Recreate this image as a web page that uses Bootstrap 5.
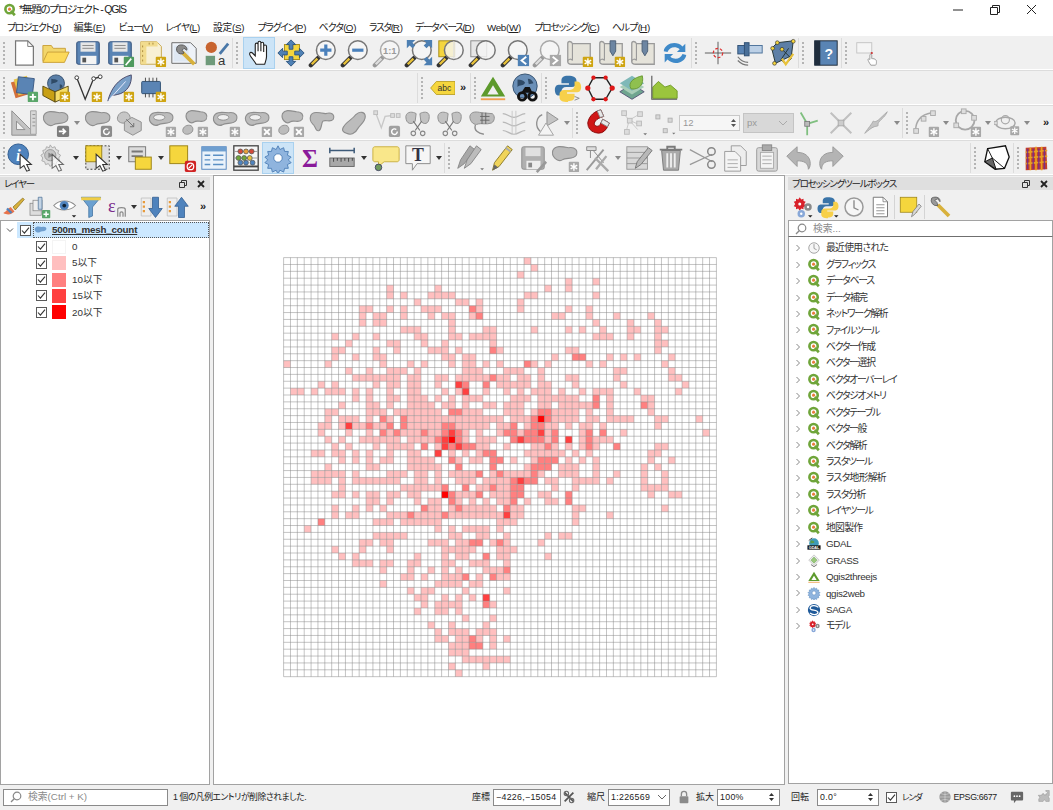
<!DOCTYPE html>
<html lang="ja">
<head>
<meta charset="UTF-8">
<meta name="viewport" content="width=device-width, initial-scale=1">
<title>*無題のプロジェクト - QGIS</title>
<link href="https://cdn.jsdelivr.net/npm/bootstrap@5.3.3/dist/css/bootstrap.min.css" rel="stylesheet">
<style>
html, body { width: 1053px; height: 810px; overflow: hidden; }
body { background: #f0f0f0; color: #222; font: 9.5px/1.2 "Liberation Sans", "Noto Sans CJK JP", sans-serif; font-feature-settings: "palt"; }
.qapp { width: 1053px; height: 810px; }
.qtitle { height: 19px; background: #fff; padding: 0 3px; font-size: 10.5px; }
.qtitle > span:first-of-type { letter-spacing: -1.2px; }
.qtitle svg { width: 14px; height: 14px; margin-right: 2px; }
.qctl { width: 37px; height: 17px; }
.qctl svg { width: 37px; height: 17px; }
.qmenu { height: 17px; background: #fff; padding-left: 7px; gap: 13.4px; font-size: 9.8px; }
.qmenu u { text-underline-offset: 1px; letter-spacing: -.1px; }
.kn { letter-spacing: -1.3px; } .kw { letter-spacing: -.8px; } .kj { letter-spacing: -.3px; }
.qbars { height: 139px; }
.qrow { height: 34px; border-bottom: 1px solid #fff; box-shadow: 0 1px 0 #dcdcdc; flex: none; }
.qrow + .qrow { margin-top: 1px; }
.tbi { width: 32px; height: 32px; flex: none; padding: 0; border: 1px solid transparent; border-radius: 0; display: flex; align-items: center; justify-content: center; }
.tbi svg { width: 30px; height: 30px; }
.tbi.on { background: #cce4f7; border-color: #a9d1ef; }
.tbi.w26 { width: 26px; } .tbi.w28 { width: 28px; } .tbi.w35 { width: 35px; } .tbi.w38 { width: 38px; }
.dda { width: 10px; flex: none; height: 32px; display: flex; align-items: center; justify-content: center; }
.dda::after { content: ""; border: 3px solid transparent; border-top: 4px solid #333; border-bottom: 0; }
.dda.dim::after { border-top-color: #8a8a8a; }
.dda.w12 { width: 12px; } .dda.w8 { width: 8px; }
.grip { width: 11px; flex: none; height: 30px; position: relative; border-left: 1px solid #dcdcdc; }
.grip::after { content: ""; position: absolute; left: 3px; top: 4px; bottom: 4px; border-left: 2px dotted #b4b4b4; }
.grip.nar { width: 7px; } .grip.g9 { width: 9px; }
.grip.first { width: 8px; border-left: 0; } .grip.first.g6 { width: 6px; }
.qfill260 { width: 249px; flex: none; }
.qfill123 { width: 123px; flex: none; }
.qmore { width: 14px; font-weight: 700; font-size: 11px; text-align: center; flex: none; }
.qspin { display: flex; width: 61px; margin-left: 1px; border: 1px solid #c8c8c8; background: #f6f6f6; color: #999; height: 16px; align-items: center; flex: none; }
.qspin .form-control { flex: 1; width: auto; min-width: 0; border: 0; background: transparent; padding: 0 0 0 3px; font-size: 9.5px; border-radius: 0; height: 14px; min-height: 0; color: inherit; line-height: 14px; box-shadow: none; font-family: inherit; }
.qarr { width: 11px; height: 14px; flex: none; }
.qpx { width: 51px; height: 20px; background: #d8d8d8; border: 1px solid #c4c4c4; color: #999; font-size: 9.5px; padding-left: 3px; margin: 0 0 0 3px; flex: none; }
.qpx svg { width: 10px; height: 6px; margin: 0 5px 0 auto; }
.qmain { height: 610px; }
.qdock { flex: none; }
.qwl { width: 210px; } .qwr { width: 265px; }
.qdtitle { height: 13px; margin: 2px 0 0 0; background: #dfdfdf; padding: 0 4px 0 4px; font-size: 9.5px; letter-spacing: -1.2px; }
.qdtitle svg { width: 10px; height: 10px; margin-left: 8px; }
.qdbar { height: 30px; padding-top: 4px; }
.qdbar.r1 { padding-left: 1px; }
.dbi { width: 26px; height: 26px; flex: none; padding: 0; border: 0; display: flex; align-items: center; justify-content: center; }
.dbi svg { width: 24px; height: 24px; }
.qdsep { width: 1px; height: 24px; background: #d4d4d4; margin: 0 2px 0 1px; flex: none; }
.qtree { background: #fff; border: 1px solid #a2a2a2; margin: 0; padding: 1px 0 0 0; list-style: none; font-size: 9.8px; color: #333; }
.qtree li { height: 16.45px; display: flex; align-items: center; }
.qtree svg.qt { width: 14px; height: 14px; flex: none; }
.qchev { width: 8px; height: 8px; flex: none; }
.qhead { padding-left: 5px; }
.qsel { background: #cce8ff; margin-left: 3px; height: 16px; width: 192px; padding-left: 3px; flex: none; }
.qselt { font-weight: 700; letter-spacing: -.2px; text-decoration: underline; outline: 1px dotted #555; outline-offset: -1px; flex: 1; align-self: stretch; display: flex; align-items: center; margin-left: 2px; padding-left: 1px; }
.qselt svg { margin-right: 4px; }
.qbox { width: 11px; height: 11px; margin: 0; flex: none; border: 1px solid #5a5a5a; border-radius: 0 !important; background-color: #fff !important; background-size: 11px 11px; }
.qbox:checked { background-image: url("data:image/svg+xml,%3csvg xmlns='http://www.w3.org/2000/svg' viewBox='0 0 11 11'%3e%3cpath d='M2 5.5l2.4 2.6L9 2.6' fill='none' stroke='%23333' stroke-width='1.1'/%3e%3c/svg%3e"); border-color: #5a5a5a; }
.qswatch { width: 14px; height: 14px; flex: none; margin: 0 6px 0 5px; }
.lv0 { background: #fff; border: 1px solid #f4f4f4; } .lv1 { background: #ffbfbf; } .lv2 { background: #ff8080; } .lv3 { background: #ff4040; } .lv4 { background: #ff0000; }
.qkid { padding-left: 35px; }
.qcanvas { width: 572px; background: #fff; border: 1px solid #a2a2a2; margin: 0 3px 0 3px; padding: 81px 0 0 2px; flex: none; }
.qmap { width: 435px; height: 421px; display: block; }
.qsearch { height: 17px; border: 1px solid #a2a2a2; border-bottom-color: #6f6f6f; background: #fff; padding-left: 6px; color: #8a8a8a; font-size: 9.8px; }
.qsearch svg { width: 12px; height: 12px; margin-right: 6px; }
.qlist { border-top: 0; padding: 3px 0 0 0; height: 547px; letter-spacing: -1.25px; }
.qlist li { padding-left: 5px; }
.qlist li.lat { letter-spacing: -.35px; }
.qlist li.kan { letter-spacing: -.7px; }
.qlist .qt { margin: 0 5px 0 5px; }
.qstatus { height: 24px; font-size: 8.8px; padding-left: 3px; }
.qfind { width: 165px; height: 17px; border: 1px solid #8a8a8a; background: #fff; color: #8a8a8a; font-size: 9.8px; padding-left: 6px; flex: none; }
.qfind svg { width: 12px; height: 12px; margin-right: 6px; }
.qmsg { width: 299px; margin-left: 5px; letter-spacing: -.45px; flex: none; }
.qlab { flex: none; font-size: 9px; }
.qval { height: 17px; background: #fff; border: 1px solid #8a8a8a; padding: 0 2px; flex: none; font-size: 8.8px; letter-spacing: .3px; color: #222; display: flex; align-items: center; }
.qval span { flex: 1; }
.qval svg { flex: none; }
.qsi { width: 14px; height: 14px; flex: none; }
.v68 { width: 68px; margin-left: 3px; } .v62 { width: 62px; } .v63 { width: 63px; }
.m1 { margin-left: 1px; } .m3 { margin-left: 3px; } .m5 { margin-left: 5px; } .m7 { margin-left: 7px; } .m8 { margin-left: 8px; } .m11 { margin-left: 11px; } .m13 { margin-left: 13px; } .m16 { margin-left: 16px; }
.qren { font-size: 8.5px; letter-spacing: -1.1px; white-space: nowrap; flex: none; }
.qepsg { letter-spacing: -.35px; margin-left: 2px; white-space: nowrap; flex: none; }
</style>
</head>
<body>
<svg class="d-none" xmlns="http://www.w3.org/2000/svg">
<defs>
<g id="q"><circle cx="15" cy="14" r="9.5" fill="#fff" stroke="#6fa53a" stroke-width="6"/><path d="M18 18l9 10" stroke="#6fa53a" stroke-width="6"/><circle cx="15" cy="14" r="3.5" fill="#e87a3a"/></g>
<g id="bstar"><rect x="20" y="20" width="11" height="11" rx="1" fill="#cfa512"/><path d="M25.5 21.5v8M22 23.5l7 4M29 23.5l-7 4" stroke="#fff" stroke-width="1.5"/></g>
<g id="gstar"><rect x="20" y="20" width="11" height="11" rx="1" fill="#a8a8a8"/><path d="M25.5 21.5v8M22 23.5l7 4M29 23.5l-7 4" stroke="#fff" stroke-width="1.5"/></g>
<g id="gx"><rect x="20" y="20" width="11" height="11" rx="1" fill="#a8a8a8"/><path d="M22.5 22.5l6 6M28.5 22.5l-6 6" stroke="#fff" stroke-width="2"/></g>
<g id="floppy"><rect x="4" y="4" width="24" height="24" rx="2" fill="#5a84b4" stroke="#3c5a82" stroke-width="1.2"/><rect x="8" y="4.6" width="16" height="10" fill="#e6e6e6"/><path d="M10 8h12M10 11h12" stroke="#888"/><rect x="8" y="19" width="17" height="9" fill="#f4f4f4"/><rect x="10" y="21" width="4" height="5" fill="#555"/></g>
<g id="mag"><path d="M3 29l8-8" stroke="#333" stroke-width="4.6" stroke-linecap="round"/><path d="M4 28l6-6" stroke="#e8c23a" stroke-width="2.6"/><circle cx="19" cy="13" r="10" fill="#f6f6f6" fill-opacity=".8" stroke="#777" stroke-width="1.6"/></g>
<g id="magg"><path d="M3 29l8-8" stroke="#999" stroke-width="4.6" stroke-linecap="round"/><path d="M4 28l6-6" stroke="#ddd" stroke-width="2.6"/><circle cx="19" cy="13" r="10" fill="#f6f6f6" fill-opacity=".8" stroke="#a8a8a8" stroke-width="1.6"/></g>
<g id="gmap"><path d="M4 6c0-3 4-3 5 0h19v22H8c-2 0-4-1-4-3z" fill="#e5e3da" stroke="#9a9a9a" stroke-width="1.4"/><path d="M4 25c0-3 4-3 5-1V6" fill="none" stroke="#9a9a9a" stroke-width="1.2"/></g>
<g id="pin"><path d="M15 3h6v11l-3 5-3-5z" fill="#6d86a2" stroke="#4d6076"/></g>
<g id="blob"><path d="M3 8C6 2 14 4 20 5c7-1 10 3 8 8-3 5-11 2-15 5-5 3-12-4-10-10z" fill="#bcbcbc" stroke="#8e8e8e" stroke-width="1.2"/></g>
<g id="ring"><path d="M3 9C5 3 13 5 19 5c7-1 10 3 8 8-3 5-11 2-15 5C7 20 1 15 3 9z" fill="#bcbcbc" stroke="#8e8e8e" stroke-width="1.2"/><ellipse cx="13" cy="10" rx="6" ry="3" fill="#f0f0f0" stroke="#8e8e8e"/></g>
<g id="blob2"><path d="M8 6C11 1 17 3 23 4c6 0 8 4 6 8-3 5-9 0-13 3-4 3-10-3-8-9z" fill="#bcbcbc" stroke="#8e8e8e" stroke-width="1.2"/><path d="M4 24c0-4 5-7 9-5 3 2 2 7-1 8-3 2-8 1-8-3z" fill="#bcbcbc" stroke="#8e8e8e"/></g>
<g id="sciss"><path d="M3 9C4 3 11 4 14 6l-1 8c-3 4-10 4-10-5zM28 9c0-6-7-5-10-3l1 8c3 4 9 4 9-5z" fill="#c2c2c2" stroke="#8e8e8e"/><path d="M11 14l7 10M20 14l-7 10" stroke="#777" stroke-width="1.2"/><circle cx="11" cy="27" r="2.4" fill="none" stroke="#888" stroke-width="1.2"/><circle cx="21" cy="27" r="2.4" fill="none" stroke="#888" stroke-width="1.2"/></g>
<g id="cur"><path d="M14 12v15l4-3 3 6 3-1-3-6h5z" fill="#fff" stroke="#333" stroke-width="1.1"/></g>
<g id="tri"><path d="M16 4L29 25H3zM16 13l-6 10h12z" fill="#5d9a2c" fill-rule="evenodd"/><rect x="3" y="27" width="26" height="2" fill="#f0a050"/></g>
<g id="py"><path d="M16 3c-5 0-7 2-7 5v3h8v1.5H6c-3 0-4 3-4 5.5s1 6 4 6h3v-4c0-3 2-5 5-5h6c3 0 5-2 5-4V8c0-3-3-5-9-5z" fill="#3a74a8"/><path d="M16 30c5 0 7-2 7-5v-3h-8v-1.500h11c3 0 4-3 4-5.500s-1-6-4-6h-3v4c0 3-2 5-5 5h-6c-3 0-5 2-5 4v4c0 3 3 5 9 5z" fill="#f7d04a"/></g>
<g id="gears"><path d="M13 3l2 3 3-1 0 3 3 1-2 3 2 3-3 1 0 3-3-1-2 3-2-3-3 1 0-3-3-1 2-3-2-3 3-1 0-3 3 1z" fill="#d8212a"/><circle cx="13" cy="12" r="2" fill="#fff"/><circle cx="24" cy="16" r="5" fill="#8a8a8a"/><circle cx="24" cy="16" r="1.600" fill="#fff"/><circle cx="15" cy="25" r="5" fill="#88a8d8"/><circle cx="15" cy="25" r="1.600" fill="#fff"/></g>
<g id="wgear"><path d="M16 3l2 4 4-2 1 4 4 0-1 4 4 2-3 3 3 3-4 2 1 4-4 0-1 4-4-2-2 4-2-4-4 2-1-4-4 0 1-4-4-2 3-3-3-3 4-2-1-4 4 0 1-4 4 2z" fill="#8fb4de" stroke="#4f80b8"/><circle cx="16" cy="16" r="4.500" fill="#fff" stroke="#4f80b8"/></g>
<g id="clock"><circle cx="16" cy="16" r="12" fill="#f6f6f6" stroke="#9a9a9a" stroke-width="2"/><path d="M16 7v10l6 3" fill="none" stroke="#8a8a8a" stroke-width="1.800"/></g>
<g id="chev"><path d="M2.500 1l3 3-3 3" fill="none" stroke="#888"/></g>
</defs>
</svg>

<div class="qapp d-flex flex-column">
  <div class="qtitle d-flex align-items-center">
    <svg viewBox="0 0 32 32"><use href="#q"/></svg>
    <span>*無題のプロジェクト - QGIS</span>
    <span class="qctl ms-auto"><svg viewBox="0 0 37 17"><path d="M14 9h10" stroke="#222"/></svg></span>
    <span class="qctl"><svg viewBox="0 0 37 17"><path d="M14.500 6.500h7v7h-7zM16.500 6.500v-2h7v7h-2" fill="none" stroke="#222"/></svg></span>
    <span class="qctl"><svg viewBox="0 0 37 17"><path d="M14 4l9 9M23 4l-9 9" stroke="#222"/></svg></span>
  </div>
  <div class="qmenu d-flex align-items-center">
    <span class="kn">プロジェクト(<u>J</u>)</span><span class="kj">編集(<u>E</u>)</span><span class="kn">ビュー(<u>V</u>)</span><span class="kw">レイヤ(<u>L</u>)</span><span class="kj">設定(<u>S</u>)</span><span class="kn">プラグイン(<u>P</u>)</span><span class="kw">ベクタ(<u>O</u>)</span><span class="kn">ラスタ(<u>R</u>)</span><span class="kn">データベース(<u>D</u>)</span><span class="kj">Web(<u>W</u>)</span><span class="kn">プロセッシング(<u>C</u>)</span><span class="kw">ヘルプ(<u>H</u>)</span>
  </div>

  <div class="qbars">
    <!-- row 1 -->
    <div class="qrow d-flex align-items-center">
      <span class="grip first"></span>
      <span class="tbi"><svg viewBox="0 0 32 32"><path d="M7 3h13l6 6v20H7z" fill="#fff" stroke="#777" stroke-width="1.300"/><path d="M20 3v6h6" fill="none" stroke="#777"/></svg></span>
      <span class="tbi"><svg viewBox="0 0 32 32"><path d="M2 25V8h9l2 3h13v4" fill="#f2d66b" stroke="#c9a03a"/><path d="M2 26l5-11h23l-5 11z" fill="#fcd95a" stroke="#c9a03a"/></svg></span>
      <span class="tbi"><svg viewBox="0 0 32 32"><use href="#floppy"/></svg></span>
      <span class="tbi"><svg viewBox="0 0 32 32"><use href="#floppy"/><rect x="20" y="20" width="11" height="11" rx="1" fill="#4f9a5e"/><path d="M22 29l6-7" stroke="#fff" stroke-width="1.800"/></svg></span>
      <span class="tbi"><svg viewBox="0 0 32 32"><path d="M4 4h17l5 5v19H4z" fill="#f8f0d4" stroke="#c8a84e"/><path d="M4 4h6v24H4zM4 4h18v5H4z" fill="#f2dc8e"/><path d="M6 8v2m0 3v2m0 3v2m0 3v2M13 5v2m4-2v2" stroke="#a8883a"/><use href="#bstar"/></svg></span>
      <span class="tbi"><svg viewBox="0 0 32 32"><path d="M3 5h20l6 6v16H3z" fill="#eef2f8" stroke="#666"/><path d="M5 8h16v17H5z" fill="#dfe8f3"/><path d="M14 15l13 13" stroke="#d8b13c" stroke-width="4"/><path d="M10 8a5 5 0 0 0 6 8l-2-3 2-2 3 2c1-4-4-7-9-5z" fill="#8a8a8a" stroke="#555"/></svg></span>
      <span class="tbi"><svg viewBox="0 0 32 32"><circle cx="11" cy="10" r="6" fill="#c8642f"/><path d="M20 17L29 6" stroke="#4a78a8" stroke-width="3"/><rect x="5" y="19" width="10" height="10" fill="#6f9a7a"/><text x="18" y="29" font-size="14" fill="#333">a</text></svg></span>
      <span class="grip"></span>
      <span class="tbi on"><svg viewBox="0 0 32 32"><path d="M13 28C10 23 6 19 6 17c0-2 2-2 3-1l3 3V7c0-2 3-2 3 0v7V5c0-2 3-2 3 0v9V6c0-2 3-2 3 0v9V9c0-2 3-2 3 0v11c0 3-1 5-2 8z" fill="#fff" stroke="#222" stroke-width="1.200"/></svg></span>
      <span class="tbi"><svg viewBox="0 0 32 32"><rect x="9" y="7" width="16" height="16" fill="#f5d63d" stroke="#a58a15"/><g fill="#4f81b5" stroke="#2f5680"><path d="M16 2l5 5h-3v5h-4V7h-3z"/><path d="M16 30l5-5h-3v-5h-4v5h-3z"/><path d="M2 16l5-5v3h5v4H7v3z"/><path d="M30 16l-5-5v3h-5v4h5v3z"/></g></svg></span>
      <span class="tbi"><svg viewBox="0 0 32 32"><use href="#mag"/><path d="M13 13h12M19 7v12" stroke="#4a80bb" stroke-width="3.400"/></svg></span>
      <span class="tbi"><svg viewBox="0 0 32 32"><use href="#mag"/><path d="M13 13h12" stroke="#4a80bb" stroke-width="3.400"/></svg></span>
      <span class="tbi"><svg viewBox="0 0 32 32"><use href="#magg"/><text x="19" y="17" font-size="10" font-weight="700" fill="#9a9a9a" text-anchor="middle">1:1</text></svg></span>
      <span class="tbi"><svg viewBox="0 0 32 32"><use href="#mag"/><g fill="#4d7fb2"><path d="M3 2h9L9 5l3 3-3 3-3-3-3 3z"/><path d="M30 2h-9l3 3-3 3 3 3 3-3 3 3z"/><path d="M30 29h-9l3-3-3-3 3-3 3 3 3-3z"/></g></svg></span>
      <span class="tbi"><svg viewBox="0 0 32 32"><rect x="3" y="3" width="17" height="17" fill="#f5d63d" stroke="#a58a15"/><use href="#mag"/><path d="M19 3.500v19" stroke="#ddd"/></svg></span>
      <span class="tbi"><svg viewBox="0 0 32 32"><rect x="3" y="3" width="17" height="17" fill="#e6e6e6" stroke="#888"/><use href="#mag"/></svg></span>
      <span class="tbi"><svg viewBox="0 0 32 32"><use href="#mag"/><rect x="19" y="18" width="12" height="12" fill="#4f81b5"/><path d="M28 20l-5 4 5 4" fill="none" stroke="#fff" stroke-width="2"/></svg></span>
      <span class="tbi"><svg viewBox="0 0 32 32"><use href="#magg"/><rect x="19" y="18" width="12" height="12" fill="#a8a8a8"/><path d="M22 20l5 4-5 4" fill="none" stroke="#fff" stroke-width="2"/></svg></span>
      <span class="tbi"><svg viewBox="0 0 32 32"><use href="#gmap"/><use href="#bstar"/></svg></span>
      <span class="tbi"><svg viewBox="0 0 32 32"><use href="#gmap"/><use href="#pin"/><use href="#bstar"/></svg></span>
      <span class="tbi"><svg viewBox="0 0 32 32"><use href="#gmap"/><use href="#pin"/></svg></span>
      <span class="tbi"><svg viewBox="0 0 32 32"><path d="M4 14C5 6 17 2 24 9l3-3v9h-9l3-3C16 8 10 10 8 15z" fill="#3f8ac9"/><path d="M28 18C27 26 15 30 8 23l-3 3v-9h9l-3 3C16 24 22 22 24 17z" fill="#3f8ac9"/></svg></span>
      <span class="grip"></span>
      <span class="tbi"><svg viewBox="0 0 32 32"><path d="M2 16h28M16 4v24" stroke="#555"/><circle cx="16" cy="16" r="5" fill="none" stroke="#d33" stroke-width="1.300" stroke-dasharray="3 2"/></svg></span>
      <span class="tbi"><svg viewBox="0 0 32 32"><rect x="3" y="8" width="8" height="9" fill="#5a84b4" stroke="#2f4f72"/><rect x="10" y="5" width="5" height="14" fill="#4a6f98" stroke="#2f4f72"/><rect x="15" y="8" width="14" height="8" fill="#bcd0e6" stroke="#4a6f98"/><path d="M3 20c3 4 7 6 11 6M3 24c3 3 7 5 11 5" fill="none" stroke="#777" stroke-width="1.300"/></svg></span>
      <span class="tbi"><svg viewBox="0 0 32 32"><path d="M5 11L11 5l17-2-2 16-17 8z" fill="#5d7fa6" stroke="#233"/><path d="M16 12l10 10-6 6-5-5 8-12" fill="none" stroke="#233"/><g fill="#f5d63d" stroke="#333" stroke-width=".7"><circle cx="6" cy="11" r="2"/><circle cx="11" cy="5" r="2"/><circle cx="28" cy="3.500" r="2"/><circle cx="8" cy="27" r="2"/><circle cx="16" cy="12" r="2"/></g><path d="M16 22l4 6 8-11" fill="none" stroke="#e8c23a" stroke-width="2.400"/></svg></span>
      <span class="grip"></span>
      <span class="tbi"><svg viewBox="0 0 32 32"><rect x="5" y="3" width="24" height="26" fill="#5984b4" stroke="#1d2a38"/><rect x="5" y="3" width="6" height="26" fill="#1f2d3d"/><text x="20" y="22" font-size="15" font-weight="700" fill="#fff" text-anchor="middle">?</text></svg></span>
      <span class="grip"></span>
      <span class="tbi"><svg viewBox="0 0 32 32"><rect x="4" y="5" width="16" height="11" fill="#f5f5f5" stroke="#c4c4c4"/><circle cx="20" cy="16" r="1.200" fill="#c33"/><path d="M19 29c-2-3-3-5-3-6s1-1 2 0v-5c0-1 2-1 2 0v4h1c2 0 4 1 4 3s0 3-1 4z" fill="#fff" stroke="#999"/></svg></span>
    </div>
    <!-- row 2 -->
    <div class="qrow d-flex align-items-center">
      <span class="grip first"></span>
      <span class="tbi"><svg viewBox="0 0 32 32"><path d="M2 10l13-4 5 17-13 4z" fill="#d2703a"/><path d="M5 7l14-4 5 17-14 4z" fill="#e8c64a"/><path d="M10 4l17 2-2 17-17-2z" fill="#5a84b4" stroke="#3c5a82"/><rect x="20" y="20" width="11" height="11" rx="1" fill="#5aa66a"/><path d="M25.500 22v7M22 25.500h7" stroke="#fff" stroke-width="2"/></svg></span>
      <span class="tbi"><svg viewBox="0 0 32 32"><circle cx="16" cy="11" r="9" fill="#5a7fa8" stroke="#36506e"/><path d="M11 6c3 1 5 0 7 2-1 3-5 2-7 4zM20 12c2 0 3 1 3 3l-3 2z" fill="#2f4a66"/><path d="M2 14l13 6v11L2 24z" fill="#c8a015" stroke="#5a4a10"/><path d="M15 20l14-6v11l-14 6z" fill="#f3dc6a" stroke="#5a4a10"/><use href="#bstar"/></svg></span>
      <span class="tbi"><svg viewBox="0 0 32 32"><path d="M4 5l9 23 9-22 8-2" fill="none" stroke="#333" stroke-width="1.400"/><circle cx="4" cy="5" r="2" fill="#fff" stroke="#333"/><circle cx="22" cy="6" r="2" fill="#fff" stroke="#333"/><circle cx="29" cy="4" r="2" fill="#fff" stroke="#333"/><use href="#bstar"/></svg></span>
      <span class="tbi"><svg viewBox="0 0 32 32"><path d="M3 30C6 18 13 6 28 2c1 9-4 19-15 21l-5 1" fill="#7aa0c8" stroke="#446"/><path d="M4 29L22 9" stroke="#eef"/><use href="#bstar"/></svg></span>
      <span class="tbi"><svg viewBox="0 0 32 32"><rect x="5" y="9" width="20" height="13" rx="1" fill="#5a84b4" stroke="#2f4f72"/><path d="M9 5v4m4-4v4m4-4v4m4-4v4M9 22v4m4-4v4m4-4v4" stroke="#444"/><use href="#bstar"/></svg></span>
      <span class="qfill260"></span>
      <span class="grip"></span>
      <span class="tbi w28"><svg viewBox="0 0 32 32"><path d="M2 16l7-8h23v16H9z" fill="#f5d63d" stroke="#b59a1c"/><text x="19" y="20" font-size="10.500" fill="#333" text-anchor="middle">abc</text></svg></span>
      <span class="qmore">»</span>
      <span class="grip nar"></span>
      <span class="tbi"><svg viewBox="0 0 32 32"><use href="#tri"/></svg></span>
      <span class="tbi"><svg viewBox="0 0 32 32"><circle cx="16" cy="14" r="13" fill="#6b90b8" stroke="#34506e"/><path d="M8 7c4 0 6 1 8 3-1 4-6 2-8 5zM19 6c3 0 5 2 6 5l-5 1z" fill="#2f4a66"/><circle cx="13" cy="25" r="4" fill="none" stroke="#111" stroke-width="3"/><circle cx="24" cy="25" r="4" fill="none" stroke="#111" stroke-width="3"/><path d="M12 21l4-6h5l3 6z" fill="#111"/></svg></span>
      <span class="grip"></span>
      <span class="tbi"><svg viewBox="0 0 32 32"><use href="#py"/><path d="M23 25l5 2-5 2" fill="none" stroke="#888"/></svg></span>
      <span class="tbi"><svg viewBox="0 0 32 32"><path d="M9 5h13l7 11-7 12H9L3 16z" fill="none" stroke="#222" stroke-width="1.500"/><g fill="#e01818"><circle cx="9" cy="5" r="2.300"/><circle cx="22" cy="5" r="2.300"/><circle cx="29" cy="16" r="2.800"/><circle cx="22" cy="28" r="2.300"/><circle cx="9" cy="28" r="2.300"/><circle cx="3" cy="16" r="2.800"/></g></svg></span>
      <span class="tbi"><svg viewBox="0 0 32 32"><path d="M3 20l13 8 13-8-13-8z" fill="#6fa58f" stroke="#557"/><path d="M3 15l13 8 13-8-13-8z" fill="#a8cdb8"/><path d="M3 11L16 3l13 8-13 8z" fill="#7fb8b8"/><path d="M15 17C11 10 18 5 27 3c2 9-3 15-12 14z" fill="#8fc04f" stroke="#6a9a35"/></svg></span>
      <span class="tbi"><svg viewBox="0 0 32 32"><path d="M4 27V15l6-6 7 6 6-2 7 6v8z" fill="#9bc53d" stroke="#6f9a25"/><path d="M3 3v25h27" fill="none" stroke="#555" stroke-width="1.200"/></svg></span>
    </div>
    <!-- row 3 -->
    <div class="qrow d-flex align-items-center">
      <span class="grip first"></span>
      <span class="tbi"><svg viewBox="0 0 32 32"><path d="M3 29V3l26 26z" fill="#c4c4c4" stroke="#8e8e8e"/><path d="M8 23v-9l9 9z" fill="#f0f0f0" stroke="#8e8e8e"/><path d="M23 3h6v25h-6z" fill="#d8d8d8" stroke="#a0a0a0"/><path d="M25 7h3m-3 4h3m-3 4h3m-3 4h3" stroke="#8e8e8e"/></svg></span>
      <span class="tbi"><svg viewBox="0 0 32 32"><use href="#blob"/><rect x="17" y="19" width="13" height="12" rx="2" fill="#7c7c7c"/><path d="M19 25h6m-2-3l3 3-3 3" fill="none" stroke="#fff" stroke-width="1.800"/></svg></span><span class="dda dim"></span>
      <span class="tbi"><svg viewBox="0 0 32 32"><use href="#blob"/><rect x="19" y="19" width="12" height="12" rx="2" fill="#8c8c8c"/><path d="M28 25a3 3 0 1 1-1-2" fill="none" stroke="#fff" stroke-width="1.500"/></svg></span>
      <span class="tbi"><svg viewBox="0 0 32 32"><path d="M3 9C5 3 13 3 15 7c3 4 0 9-4 9C6 17 1 14 3 9z" fill="#c6c6c6" stroke="#8e8e8e"/><path d="M18 10l10 5v9l-9 5-9-5v-9z" fill="#c6c6c6" stroke="#8e8e8e"/><path d="M12 12l8 8" stroke="#6e6e6e"/><path d="M20 16v4h-4" fill="none" stroke="#6e6e6e"/></svg></span>
      <span class="tbi"><svg viewBox="0 0 32 32"><use href="#ring"/><use href="#gstar"/></svg></span>
      <span class="tbi"><svg viewBox="0 0 32 32"><use href="#blob2"/><use href="#gstar"/></svg></span>
      <span class="tbi"><svg viewBox="0 0 32 32"><use href="#ring"/><use href="#gstar"/></svg></span>
      <span class="tbi"><svg viewBox="0 0 32 32"><use href="#ring"/><use href="#gx"/></svg></span>
      <span class="tbi"><svg viewBox="0 0 32 32"><use href="#blob2"/><use href="#gx"/></svg></span>
      <span class="tbi"><svg viewBox="0 0 32 32"><path d="M4 8C6 3 14 5 20 6c6-2 10 1 8 6-3 4-8 0-11 2-2 2-1 8-4 10C9 26 9 18 6 17c-2-2-3-6-2-9z" fill="#bcbcbc" stroke="#8e8e8e" stroke-width="1.200"/></svg></span>
      <span class="tbi"><svg viewBox="0 0 32 32"><path d="M4 22C6 15 14 13 18 7c4-4 10-3 10 2 0 6-6 9-8 13-3 6-8 7-12 5-3-1-5-3-4-5z" fill="#bcbcbc" stroke="#8e8e8e" stroke-width="1.200"/></svg></span>
      <span class="tbi"><svg viewBox="0 0 32 32"><path d="M5 5l6 16 4-12 8-1" fill="none" stroke="#c8c8c8" stroke-width="1.400"/><rect x="3" y="3" width="4" height="4" fill="#ddd" stroke="#bbb"/><rect x="21" y="6" width="4" height="4" fill="#ddd" stroke="#bbb"/><rect x="27" y="6" width="4" height="4" fill="#ddd" stroke="#bbb"/><rect x="19" y="19" width="12" height="12" rx="2" fill="#a0a0a0"/><path d="M28 25a3 3 0 1 1-1-2" fill="none" stroke="#fff" stroke-width="1.500"/></svg></span>
      <span class="tbi"><svg viewBox="0 0 32 32"><use href="#sciss"/></svg></span>
      <span class="tbi"><svg viewBox="0 0 32 32"><use href="#sciss"/></svg></span>
      <span class="tbi"><svg viewBox="0 0 32 32"><path d="M3 9C4 3 11 4 15 5l12 1c3 2 3 8-1 10-5 2-11 0-14 1-4 2-9-2-9-8z" fill="#bcbcbc" stroke="#8e8e8e"/><path d="M16 5v12M20 5v12M14 9h10M14 13h10" stroke="#666"/><path d="M9 18c-2 6 3 9 9 10" fill="none" stroke="#8e8e8e" stroke-width="1.500"/></svg></span>
      <span class="tbi"><svg viewBox="0 0 32 32"><path d="M4 6c5 0 7 4 12 4s7-4 12-4M4 15c5 0 7 4 12 4s7-4 12-4M4 24c5 0 7 4 12 4s7-4 12-4" fill="none" stroke="#b8b8b8" stroke-width="1.300"/><path d="M14 3v25M18 3v25" stroke="#c8c8c8"/></svg></span>
      <span class="tbi"><svg viewBox="0 0 32 32"><path d="M17 4v15l12-7z" fill="#c4c4c4" stroke="#8e8e8e"/><path d="M12 7C5 10 4 20 10 25" fill="none" stroke="#8e8e8e" stroke-width="1.400"/><path d="M16 16l-8 13h16z" fill="#f4f4f4" stroke="#a0a0a0"/></svg></span><span class="dda dim"></span>
      <span class="grip"></span>
      <span class="tbi"><svg viewBox="0 0 32 32"><path d="M4 16a11 11 0 0 0 20 6l3-6-7-4-3 6c-2 3-7 1-6-2 1-3 4-5 7-6l3-1-3-7-3 1C9 5 5 10 4 16z" fill="#d01616" stroke="#880b0b"/><path d="M20 12l7 4-2 4-7-4zM14 3l3 7 4-1-3-7z" fill="#e8e8e8" stroke="#888"/></svg></span>
      <span class="tbi w35"><svg viewBox="0 0 32 32"><path d="M6 6l6 7-3 11M12 13l10-6M12 13l9 4M12 13l9 10" fill="none" stroke="#c8c8c8"/><g fill="#ddd" stroke="#bbb"><rect x="4" y="3" width="5" height="5"/><rect x="21" y="4" width="5" height="5"/><rect x="10" y="11" width="5" height="5"/><rect x="20" y="14" width="5" height="5"/><rect x="7" y="23" width="5" height="5"/></g><path d="M27 27l2 2 2-2z" fill="#777"/></svg></span>
      <span class="tbi w28"><svg viewBox="0 0 32 32"><g fill="#d8d8d8" stroke="#aaa"><rect x="6" y="6" width="5" height="5"/><rect x="21" y="10" width="5" height="5"/><rect x="15" y="23" width="5" height="5"/></g><path d="M26 28l2 2 2-2z" fill="#777"/></svg></span>
      <span class="qspin"><input class="form-control" type="text" value="12" readonly><svg class="qarr" viewBox="0 0 11 14"><path d="M3 6l2.500-3L8 6zM3 8l2.500 3L8 8z" fill="#555"/></svg></span>
      <span class="qpx d-flex align-items-center">px<svg viewBox="0 0 10 6"><path d="M1 1l4 4 4-4" fill="none" stroke="#aaa"/></svg></span>
      <span class="tbi w28"><svg viewBox="0 0 32 32"><path d="M15 17L7 3M15 17l13-4M15 17v14" stroke="#7fbf7f" stroke-width="2.200"/><rect x="12" y="14" width="6" height="6" fill="#bbb" stroke="#777"/></svg></span>
      <span class="tbi w38"><svg viewBox="0 0 32 32"><path d="M5 5l22 22M27 5L5 27" stroke="#c0c0c0" stroke-width="2.200"/><rect x="13" y="13" width="6" height="6" fill="#ccc" stroke="#aaa"/></svg></span>
      <span class="tbi"><svg viewBox="0 0 32 32"><path d="M4 27c4-6 7-9 9-13 4 2 6-2 15-10-3 7-8 8-10 13 1 3-1 2-4 3-3 1-6 4-10 7z" fill="#c4c4c4" stroke="#aaa"/></svg></span><span class="dda dim"></span>
      <span class="grip nar"></span>
      <span class="tbi"><svg viewBox="0 0 32 32"><path d="M6 24C6 14 12 7 23 5" fill="none" stroke="#a8a8a8" stroke-width="1.500"/><rect x="4" y="22" width="5" height="5" fill="#ddd" stroke="#aaa"/><rect x="12" y="9" width="5" height="5" fill="#ddd" stroke="#aaa"/><rect x="22" y="3" width="5" height="5" fill="#ddd" stroke="#aaa"/><use href="#gstar"/></svg></span><span class="dda dim"></span>
      <span class="tbi"><svg viewBox="0 0 32 32"><circle cx="14" cy="13" r="10" fill="none" stroke="#a8a8a8" stroke-width="2"/><rect x="10" y="1" width="5" height="5" fill="#ddd" stroke="#aaa"/><rect x="21" y="8" width="5" height="5" fill="#ddd" stroke="#aaa"/><rect x="2" y="16" width="5" height="5" fill="#ddd" stroke="#aaa"/><use href="#gstar"/></svg></span><span class="dda dim"></span>
      <span class="tbi w28"><svg viewBox="0 0 32 32"><ellipse cx="14" cy="16" rx="12" ry="7" fill="none" stroke="#a8a8a8" stroke-width="1.800"/><circle cx="14" cy="12" r="5" fill="none" stroke="#a8a8a8" stroke-width="1.400"/><rect x="0" y="14" width="4" height="4" fill="#ddd" stroke="#aaa"/><use href="#gstar"/></svg></span><span class="dda dim w12"></span>
      <span class="qmore ms-auto">»</span>
    </div>
    <!-- row 4 -->
    <div class="qrow d-flex align-items-center">
      <span class="grip first g6"></span>
      <span class="tbi"><svg viewBox="0 0 32 32"><circle cx="12" cy="12" r="11" fill="#4f83bd" stroke="#2d5a8e"/><text x="12" y="19" font-size="18" font-weight="700" font-style="italic" fill="#fff" text-anchor="middle" font-family="Liberation Serif">i</text><use href="#cur"/></svg></span>
      <span class="tbi"><svg viewBox="0 0 32 32"><path d="M12 2l2 3 3-1 1 3 3 1-1 3 3 2-2 3 1 3-3 1-1 3-3-1-3 3-2-3-3 1-1-3-3-1 1-3-2-3 3-2-1-3 3-1 1-3 3 1z" fill="#e0e0e0" stroke="#aaa"/><circle cx="12" cy="13" r="6" fill="#c4c4c4" stroke="#999"/><path d="M10 10v6l5-3z" fill="#888"/><use href="#cur" opacity=".7"/></svg></span><span class="dda w12"></span>
      <span class="tbi"><svg viewBox="0 0 32 32"><rect x="3" y="3" width="25" height="25" fill="#dedede" stroke="#333" stroke-dasharray="2 2"/><rect x="3" y="3" width="17" height="17" fill="#f5d63d" stroke="#9a8214"/><use href="#cur"/></svg></span><span class="dda"></span>
      <span class="tbi"><svg viewBox="0 0 32 32"><rect x="4" y="4" width="18" height="16" fill="#dcdcdc" stroke="#777"/><path d="M7 9h12M7 14h12" stroke="#777" stroke-width="2"/><rect x="11" y="15" width="17" height="13" fill="#f5d63d" stroke="#9a8214"/></svg></span><span class="dda"></span>
      <span class="tbi"><svg viewBox="0 0 32 32"><rect x="3" y="3" width="19" height="19" fill="#f5d63d" stroke="#9a8214"/><rect x="19" y="19" width="12" height="12" rx="2" fill="#d02222"/><circle cx="25" cy="25" r="3.500" fill="none" stroke="#fff" stroke-width="1.300"/><path d="M23 27l4-4" stroke="#fff" stroke-width="1.300"/></svg></span>
      <span class="tbi"><svg viewBox="0 0 32 32"><rect x="3" y="4" width="26" height="24" fill="#eaf2fa" stroke="#4f83bd"/><rect x="3" y="4" width="26" height="5" fill="#6f9fd0"/><path d="M6 13h6m3 0h11M6 18h6m3 0h11M6 23h6m3 0h11" stroke="#5a8fc4" stroke-width="1.500"/></svg></span>
      <span class="tbi"><svg viewBox="0 0 32 32"><rect x="3" y="3" width="26" height="26" fill="#f6f6f6" stroke="#444" stroke-width="1.400"/><path d="M3 25h26" stroke="#444" stroke-width="2"/><path d="M3 9h26M3 16h26" stroke="#999"/><g stroke="#555" stroke-width=".8"><circle cx="10" cy="9" r="2.600" fill="#d04a3a"/><circle cx="16" cy="9" r="2.600" fill="#e8a03a"/><circle cx="22" cy="9" r="2.600" fill="#d04a3a"/><circle cx="8" cy="16" r="2.600" fill="#6fa53a"/><circle cx="14" cy="16" r="2.600" fill="#6fa53a"/><circle cx="20" cy="16" r="2.600" fill="#e8c23a"/><circle cx="10" cy="21" r="2.600" fill="#4f83bd"/><circle cx="16" cy="21" r="2.600" fill="#4f83bd"/><circle cx="23" cy="21" r="2.600" fill="#4f83bd"/></g></svg></span>
      <span class="tbi on"><svg viewBox="0 0 32 32"><use href="#wgear"/></svg></span>
      <span class="tbi"><svg viewBox="0 0 32 32"><text x="16" y="26" font-size="26" font-weight="700" fill="#8a1a9a" text-anchor="middle" font-family="Liberation Serif">Σ</text></svg></span>
      <span class="tbi"><svg viewBox="0 0 32 32"><path d="M3 8h26M3 5v6M29 5v6" stroke="#3d5a78" stroke-width="1.600"/><rect x="3" y="16" width="26" height="9" fill="#a8a8a8" stroke="#666"/><path d="M7 16v4m4-4v3m4-3v4m4-4v3m4-3v4m4-4v3" stroke="#444"/></svg></span><span class="dda w12"></span>
      <span class="tbi"><svg viewBox="0 0 32 32"><path d="M4 4h24c1 0 2 1 2 2v12c0 1-1 2-2 2H14l-6 5v-5H4c-1 0-2-1-2-2V6c0-1 1-2 2-2z" fill="#f9e78a" stroke="#c9b040"/><circle cx="8" cy="26" r="3.500" fill="#6f9a5e" stroke="#446"/></svg></span>
      <span class="tbi"><svg viewBox="0 0 32 32"><path d="M3 3h26v19H15l-5 7v-7H3z" fill="#f6f6f6" stroke="#8a8a8a"/><text x="16" y="19" font-size="19" font-weight="700" fill="#334" text-anchor="middle" font-family="Liberation Serif">T</text></svg></span><span class="dda"></span>
      <span class="grip g9"></span>
      <span class="tbi"><svg viewBox="0 0 32 32"><path d="M4 27l3-9L17 3l5 4-11 15z" fill="#a8a8a8" stroke="#888"/><path d="M11 27l3-9L24 3l5 4-11 15z" fill="#bcbcbc" stroke="#888"/><path d="M28 27l2 2 2-2z" fill="#777"/></svg></span>
      <span class="tbi"><svg viewBox="0 0 32 32"><path d="M7 29l2-8L23 3l5 4-14 18z" fill="#f0d45a" stroke="#8a7a2a"/><path d="M21 5l5 4" stroke="#aaa" stroke-width="2"/><path d="M7 29l2-6 4 3z" fill="#666"/></svg></span>
      <span class="tbi"><svg viewBox="0 0 32 32"><rect x="4" y="4" width="24" height="24" rx="2" fill="#b0b0b0" stroke="#8e8e8e"/><rect x="8" y="5" width="16" height="9" fill="#e0e0e0"/><rect x="9" y="19" width="15" height="9" fill="#eee"/><rect x="11" y="21" width="4" height="5" fill="#8a8a8a"/><path d="M19 30l10-11 2 2-10 11z" fill="#999"/></svg></span>
      <span class="tbi"><svg viewBox="0 0 32 32"><use href="#blob"/><use href="#gstar"/></svg></span>
      <span class="tbi"><svg viewBox="0 0 32 32"><path d="M5 4h10v4H5zM9 8v8M12 8l11 13" stroke="#888" fill="#ddd"/><path d="M5 29L23 7" stroke="#999" stroke-width="2"/><path d="M14 16l14 14m-2-16L15 28" stroke="#aaa" stroke-width="2.500"/></svg></span><span class="dda dim"></span>
      <span class="tbi"><svg viewBox="0 0 32 32"><rect x="3" y="4" width="22" height="24" fill="#d8d8d8" stroke="#999"/><path d="M3 10h22M3 16h22M3 22h22" stroke="#999"/><path d="M12 27l2-7L26 5l4 3-12 15z" fill="#b8b8b8" stroke="#777"/></svg></span>
      <span class="tbi"><svg viewBox="0 0 32 32"><path d="M6 8h20l-2 21H8z" fill="#aaa" stroke="#7a7a7a"/><path d="M4 7h24M12 7V4h8v3" fill="none" stroke="#7a7a7a" stroke-width="2"/><path d="M12 11v15m4-15v15m4-15v15" stroke="#eee" stroke-width="2"/></svg></span>
      <span class="tbi"><svg viewBox="0 0 32 32"><path d="M2 7l24 13M2 23L26 12" stroke="#999" stroke-width="1.400"/><circle cx="25" cy="9" r="4" fill="none" stroke="#888" stroke-width="1.600"/><circle cx="25" cy="23" r="4" fill="none" stroke="#888" stroke-width="1.600"/></svg></span>
      <span class="tbi"><svg viewBox="0 0 32 32"><path d="M12 3h10l6 6v15H12z" fill="#eee" stroke="#999"/><path d="M5 9h11l6 6v15H5z" fill="#f4f4f4" stroke="#999"/><path d="M8 18h11M8 22h11M8 26h11" stroke="#aaa"/></svg></span>
      <span class="tbi"><svg viewBox="0 0 32 32"><rect x="5" y="5" width="22" height="25" rx="2" fill="#d8d8d8" stroke="#999"/><rect x="11" y="2" width="10" height="6" fill="#aaa" stroke="#888"/><rect x="9" y="10" width="14" height="17" fill="#f4f4f4" stroke="#aaa"/><path d="M11 14h10M11 18h10M11 22h10" stroke="#aaa"/></svg></span>
      <span class="tbi"><svg viewBox="0 0 32 32"><path d="M3 14L14 4v6c9 0 14 5 14 12 0 3-1 5-2 6 0-7-5-9-12-9v6z" fill="#b4b4b4" stroke="#999"/></svg></span>
      <span class="tbi"><svg viewBox="0 0 32 32"><path d="M29 14L18 4v6C9 10 4 15 4 22c0 3 1 5 2 6 0-7 5-9 12-9v6z" fill="#b4b4b4" stroke="#999"/></svg></span>
      <span class="qfill123"></span>
      <span class="grip"></span>
      <span class="tbi"><svg viewBox="0 0 32 32"><path d="M6 6L25 3l4 12-5 12-10 1L3 20z" fill="#fff" stroke="#111" stroke-width="1.400"/><path d="M3 20l8-4 4 12z" fill="#666" stroke="#111"/><path d="M6 6l5 10 13 11" fill="none" stroke="#111"/></svg></span>
      <span class="grip nar"></span>
      <span class="tbi"><svg viewBox="0 0 32 32"><path d="M5 5l22-1 1 24-23 1z" fill="#c4402c"/><path d="M5 10l23-2M5 16l23-2M5 22l23-2M10 5v24M16 4v25M22 4v25" stroke="#e8a020" stroke-width="1.800"/><path d="M7 6v22M13 6v22M19 6v22M25 6v22" stroke="#6a2a9a" stroke-width="1.500" opacity=".8"/></svg></span>
    </div>
  </div>

  <div class="qmain d-flex">
    <!-- layers dock -->
    <div class="qdock qwl d-flex flex-column">
      <div class="qdtitle d-flex align-items-center"><span>レイヤー</span>
        <svg class="ms-auto" viewBox="0 0 10 10"><path d="M1.500 3.500h5v5h-5zM3.500 3.500v-2h5v5h-2" fill="none" stroke="#333"/></svg>
        <svg viewBox="0 0 10 10"><path d="M2 2l6 6M8 2L2 8" stroke="#222" stroke-width="1.800"/></svg></div>
      <div class="qdbar d-flex align-items-center">
        <span class="dbi"><svg viewBox="0 0 32 32"><path d="M3 24c4-2 6-6 10-8l5 6c-3 3-8 6-15 2z" fill="#e8734a"/><path d="M8 18l6 6" stroke="#4f83bd" stroke-width="3"/><path d="M16 16L29 4l2 2-12 14z" fill="#d8b13c" stroke="#8a7020"/></svg></span>
        <span class="dbi"><svg viewBox="0 0 32 32"><rect x="4" y="11" width="15" height="16" fill="#ddd" stroke="#888"/><rect x="8" y="7" width="12" height="14" fill="#eee" stroke="#888"/><path d="M15 3h5v16h-5z" fill="#c4d4e4" stroke="#4f7398"/><rect x="20" y="20" width="11" height="11" rx="1" fill="#5aa66a"/><path d="M25.500 22v7M22 25.500h7" stroke="#fff" stroke-width="2"/></svg></span>
        <span class="dbi"><svg viewBox="0 0 32 32"><path d="M1 14c7-8 21-8 29 0-8 8-22 8-29 0z" fill="#fff" stroke="#888" stroke-width="1.400"/><circle cx="15" cy="14" r="6" fill="#4f83bd"/><circle cx="15" cy="14" r="2.500" fill="#123"/><path d="M25 27l3 3 3-3z" fill="#222"/></svg></span>
        <span class="dbi"><svg viewBox="0 0 32 32"><path d="M3 3h26L18 16v12l-5 2V16z" fill="#6aa0d0" stroke="#3f70a0"/><rect x="3" y="3" width="26" height="4" fill="#f0cd45"/></svg></span>
        <span class="dbi"><svg viewBox="0 0 32 32"><text x="9" y="22" font-size="24" fill="#7a2a8a" text-anchor="middle" font-family="Liberation Serif">ε</text><path d="M17 29V19c0-3 10-3 10 0v10M20 29v-5c0-2 4-2 4 0v5" fill="none" stroke="#888" stroke-width="1.600"/></svg></span><span class="dda w8"></span>
        <span class="dbi"><svg viewBox="0 0 32 32"><path d="M3 4h13v24H3z" fill="#eee" stroke="#bbb"/><path d="M5 8h3v3H5zM5 14h3v3H5zM5 20h3v3H5z" fill="#e89a3a"/><path d="M18 3h8v15h5L22 30 13 18h5z" fill="#4f83bd" stroke="#2d5a8e"/></svg></span>
        <span class="dbi"><svg viewBox="0 0 32 32"><path d="M3 4h13v24H3z" fill="#eee" stroke="#bbb"/><path d="M5 8h3v3H5zM5 14h3v3H5zM5 20h3v3H5z" fill="#e89a3a"/><path d="M18 30h8V15h5L22 3 13 15h5z" fill="#4f83bd" stroke="#2d5a8e"/></svg></span>
        <span class="qmore ms-auto">»</span>
      </div>
      <ul class="qtree flex-grow-1">
        <li class="qhead"><svg class="qchev" viewBox="0 0 8 8"><path d="M1 2.500l3 3 3-3" fill="none" stroke="#555"/></svg>
          <div class="qsel d-flex align-items-center"><input class="form-check-input qbox" type="checkbox" checked>
          <span class="qselt"><svg class="qt" viewBox="0 0 32 32"><path d="M2 12C5 6 12 8 18 9c7-2 12 1 10 6-3 5-11 3-15 6-6 3-13-3-11-9z" fill="#6f9fd0"/></svg>500m_mesh_count</span></div></li>
        <li class="qkid"><input class="form-check-input qbox" type="checkbox" checked><span class="qswatch lv0"></span>0</li>
        <li class="qkid"><input class="form-check-input qbox" type="checkbox" checked><span class="qswatch lv1"></span>5以下</li>
        <li class="qkid"><input class="form-check-input qbox" type="checkbox" checked><span class="qswatch lv2"></span>10以下</li>
        <li class="qkid"><input class="form-check-input qbox" type="checkbox" checked><span class="qswatch lv3"></span>15以下</li>
        <li class="qkid"><input class="form-check-input qbox" type="checkbox" checked><span class="qswatch lv4"></span>20以下</li>
      </ul>
    </div>

    <!-- map canvas -->
    <div class="qcanvas d-flex justify-content-center">
      <svg class="qmap" id="map" viewBox="0 0 435 421" xmlns="http://www.w3.org/2000/svg"></svg>
    </div>

    <!-- processing toolbox -->
    <div class="qdock qwr d-flex flex-column">
      <div class="qdtitle d-flex align-items-center"><span>プロセッシングツールボックス</span>
        <svg class="ms-auto" viewBox="0 0 10 10"><path d="M1.500 3.500h5v5h-5zM3.500 3.500v-2h5v5h-2" fill="none" stroke="#333"/></svg>
        <svg viewBox="0 0 10 10"><path d="M2 2l6 6M8 2L2 8" stroke="#222" stroke-width="1.800"/></svg></div>
      <div class="qdbar r1 d-flex align-items-center">
        <span class="dbi"><svg viewBox="0 0 32 32"><use href="#gears"/><path d="M24 27l3 3 3-3z" fill="#222"/></svg></span>
        <span class="dbi"><svg viewBox="0 0 32 32"><use href="#py"/><path d="M24 27l3 3 3-3z" fill="#222"/></svg></span>
        <span class="dbi"><svg viewBox="0 0 32 32"><use href="#clock"/></svg></span>
        <span class="dbi"><svg viewBox="0 0 32 32"><path d="M7 3h13l6 6v20H7z" fill="#fff" stroke="#777" stroke-width="1.300"/><path d="M20 3v6h6M11 13h11M11 17h11M11 21h11M11 25h11" fill="none" stroke="#777"/></svg></span>
        <span class="qdsep"></span>
        <span class="dbi"><svg viewBox="0 0 32 32"><rect x="3" y="3" width="22" height="20" fill="#f5d63d" stroke="#9a8214"/><path d="M18 29l2-7 8-10 3 3-9 11z" fill="#d8d8d8" stroke="#777"/></svg></span>
        <span class="qdsep"></span>
        <span class="dbi"><svg viewBox="0 0 32 32"><path d="M13 13l15 15" stroke="#d8b13c" stroke-width="5"/><path d="M5 4a7 7 0 0 0 8 10l-1-4-3-3 4-2 3 4c1-5-5-8-11-5z" fill="#999" stroke="#555"/></svg></span>
      </div>
      <div class="qsearch d-flex align-items-center"><svg viewBox="0 0 12 12"><circle cx="7" cy="5" r="3.800" fill="none" stroke="#888" stroke-width="1.200"/><path d="M4.200 7.800L1 11" stroke="#888" stroke-width="1.300"/></svg>検索...</div>
      <ul class="qtree qlist">
        <li class="kan"><svg class="qchev" viewBox="0 0 8 8"><use href="#chev"/></svg><svg class="qt" viewBox="0 0 32 32"><use href="#clock"/></svg>最近使用された</li>
        <li><svg class="qchev" viewBox="0 0 8 8"><use href="#chev"/></svg><svg class="qt" viewBox="0 0 32 32"><use href="#q"/></svg>グラフィックス</li>
        <li><svg class="qchev" viewBox="0 0 8 8"><use href="#chev"/></svg><svg class="qt" viewBox="0 0 32 32"><use href="#q"/></svg>データベース</li>
        <li><svg class="qchev" viewBox="0 0 8 8"><use href="#chev"/></svg><svg class="qt" viewBox="0 0 32 32"><use href="#q"/></svg>データ補完</li>
        <li><svg class="qchev" viewBox="0 0 8 8"><use href="#chev"/></svg><svg class="qt" viewBox="0 0 32 32"><use href="#q"/></svg>ネットワーク解析</li>
        <li><svg class="qchev" viewBox="0 0 8 8"><use href="#chev"/></svg><svg class="qt" viewBox="0 0 32 32"><use href="#q"/></svg>ファイルツール</li>
        <li><svg class="qchev" viewBox="0 0 8 8"><use href="#chev"/></svg><svg class="qt" viewBox="0 0 32 32"><use href="#q"/></svg>ベクター作成</li>
        <li><svg class="qchev" viewBox="0 0 8 8"><use href="#chev"/></svg><svg class="qt" viewBox="0 0 32 32"><use href="#q"/></svg>ベクター選択</li>
        <li><svg class="qchev" viewBox="0 0 8 8"><use href="#chev"/></svg><svg class="qt" viewBox="0 0 32 32"><use href="#q"/></svg>ベクタオーバーレイ</li>
        <li><svg class="qchev" viewBox="0 0 8 8"><use href="#chev"/></svg><svg class="qt" viewBox="0 0 32 32"><use href="#q"/></svg>ベクタジオメトリ</li>
        <li><svg class="qchev" viewBox="0 0 8 8"><use href="#chev"/></svg><svg class="qt" viewBox="0 0 32 32"><use href="#q"/></svg>ベクタテーブル</li>
        <li><svg class="qchev" viewBox="0 0 8 8"><use href="#chev"/></svg><svg class="qt" viewBox="0 0 32 32"><use href="#q"/></svg>ベクター般</li>
        <li><svg class="qchev" viewBox="0 0 8 8"><use href="#chev"/></svg><svg class="qt" viewBox="0 0 32 32"><use href="#q"/></svg>ベクタ解析</li>
        <li><svg class="qchev" viewBox="0 0 8 8"><use href="#chev"/></svg><svg class="qt" viewBox="0 0 32 32"><use href="#q"/></svg>ラスタツール</li>
        <li class="kan"><svg class="qchev" viewBox="0 0 8 8"><use href="#chev"/></svg><svg class="qt" viewBox="0 0 32 32"><use href="#q"/></svg>ラスタ地形解析</li>
        <li><svg class="qchev" viewBox="0 0 8 8"><use href="#chev"/></svg><svg class="qt" viewBox="0 0 32 32"><use href="#q"/></svg>ラスタ分析</li>
        <li><svg class="qchev" viewBox="0 0 8 8"><use href="#chev"/></svg><svg class="qt" viewBox="0 0 32 32"><use href="#q"/></svg>レイヤツール</li>
        <li class="kan"><svg class="qchev" viewBox="0 0 8 8"><use href="#chev"/></svg><svg class="qt" viewBox="0 0 32 32"><use href="#q"/></svg>地図製作</li>
        <li class="lat"><svg class="qchev" viewBox="0 0 8 8"><use href="#chev"/></svg><svg class="qt" viewBox="0 0 32 32"><circle cx="16" cy="14" r="11" fill="#3f9ab8"/><path d="M8 8c4 0 8 0 9 4-2 3-6 1-9 3z" fill="#5a9a4a"/><rect x="1" y="19" width="30" height="10" fill="#111"/><path d="M4 8l8-6" stroke="#333" stroke-width="2"/><text x="16" y="28" font-size="9" font-weight="700" fill="#fff" text-anchor="middle" font-family="Liberation Sans">GDAL</text></svg>GDAL</li>
        <li class="lat"><svg class="qchev" viewBox="0 0 8 8"><use href="#chev"/></svg><svg class="qt" viewBox="0 0 32 32"><path d="M16 2l12 12-12 12L4 14z" fill="#eee" stroke="#999"/><path d="M16 7l7 7-7 7-7-7z" fill="#9ac87a" stroke="#5a9a4a"/><path d="M9 24l7 5 7-5" fill="none" stroke="#666" stroke-width="2"/></svg>GRASS</li>
        <li class="lat"><svg class="qchev" viewBox="0 0 8 8"><use href="#chev"/></svg><svg class="qt" viewBox="0 0 32 32"><use href="#tri"/></svg>Qgis2threejs</li>
        <li class="lat"><svg class="qchev" viewBox="0 0 8 8"><use href="#chev"/></svg><svg class="qt" viewBox="0 0 32 32"><use href="#wgear"/></svg>qgis2web</li>
        <li class="lat"><svg class="qchev" viewBox="0 0 8 8"><use href="#chev"/></svg><svg class="qt" viewBox="0 0 32 32"><circle cx="16" cy="16" r="14" fill="#1f5a9a"/><path d="M26 10C20 4 8 5 7 12c0 6 18 3 18 10-1 6-13 6-18 1" fill="none" stroke="#fff" stroke-width="3"/></svg>SAGA</li>
        <li><svg class="qchev" viewBox="0 0 8 8"><use href="#chev"/></svg><svg class="qt" viewBox="0 0 32 32"><use href="#gears"/></svg>モデル</li>
      </ul>
    </div>
  </div>

  <!-- status bar -->
  <div class="qstatus d-flex align-items-center">
    <div class="qfind d-flex align-items-center"><svg viewBox="0 0 12 12"><circle cx="7" cy="5" r="3.800" fill="none" stroke="#888" stroke-width="1.200"/><path d="M4.200 7.800L1 11" stroke="#888" stroke-width="1.300"/></svg>検索(Ctrl + K)</div>
    <span class="qmsg">1 個の凡例エントリが削除されました.</span>
    <span class="qlab">座標</span>
    <span class="qval v68"><span>−4226,−15054</span></span>
    <svg class="qsi m1" viewBox="0 0 32 32"><path d="M6 6l20 20M26 6L6 26" stroke="#555" stroke-width="4"/><circle cx="10" cy="8" r="5" fill="none" stroke="#666" stroke-width="2.500"/><circle cx="22" cy="24" r="5" fill="none" stroke="#666" stroke-width="2.500"/></svg>
    <span class="qlab m11">縮尺</span>
    <span class="qval v62 m3"><span>1:226569</span><svg width="10" height="6" viewBox="0 0 10 6"><path d="M1 1l4 4 4-4" fill="none" stroke="#666"/></svg></span>
    <svg class="qsi m7" viewBox="0 0 32 32"><rect x="6" y="14" width="20" height="16" rx="2" fill="#8a8a8a"/><path d="M10 14V9c0-8 12-8 12 0v5" fill="none" stroke="#8a8a8a" stroke-width="3"/></svg>
    <span class="qlab m5">拡大</span>
    <span class="qval v63 m3"><span>100%</span><svg width="11" height="14" viewBox="0 0 11 14"><path d="M3 6l2.500-3L8 6zM3 8l2.500 3L8 8z" fill="#333"/></svg></span>
    <span class="qlab m11">回転</span>
    <span class="qval v62 m8"><span>0.0°</span><svg width="11" height="14" viewBox="0 0 11 14"><path d="M3 6l2.500-3L8 6zM3 8l2.500 3L8 8z" fill="#333"/></svg></span>
    <input class="form-check-input qbox m7" type="checkbox" checked>
    <span class="qren m5">レンダ</span>
    <svg class="qsi m16" viewBox="0 0 32 32"><circle cx="16" cy="16" r="13" fill="#9a9a9a"/><path d="M3 16h26M16 3v26M7 8c6 3 12 3 18 0M7 24c6-3 12-3 18 0" stroke="#eee" fill="none"/></svg>
    <span class="qepsg">EPSG:6677</span>
    <svg class="qsi m13" viewBox="0 0 32 32"><path d="M5 4h22c2 0 3 1 3 3v14c0 2-1 3-3 3H14l-5 6v-6H5c-2 0-3-1-3-3V7c0-2 1-3 3-3z" fill="#666"/><circle cx="10" cy="14" r="2" fill="#fff"/><circle cx="16" cy="14" r="2" fill="#fff"/><circle cx="22" cy="14" r="2" fill="#fff"/></svg>
    <svg class="qsi m13" viewBox="0 0 32 32"><path d="M3 12h8c0-5 6-5 6 0h3v-3c5 0 5-6 0-6V1h8v12c-3 0-3 5 0 5v8h-8c0-4-6-4-6 0H4v-6c3 0 3-6 0-6z" fill="#bcbcbc" stroke="#888"/></svg>
  </div>
</div>

<script>
  // 0-based row: "col" or "col:level" (level 1 when omitted)
  const rows = {
    0:"35",1:"36",2:"34",3:"41 45",4:"15 22 38 41",5:"15 17 21 22 23 24 35 36 45",6:"19 25 26 28 34",
    7:"11 12 15 17 20 21 22 27:2 28 34 41 44",8:"11 13 14 17 21 23 24 27 28:2 39 40 44 48 53",9:"11 13 14 24 45 50 54",
    10:"17 18 19 24 29 30 36 41 43 46 50 51 54 55",11:"7 10 13 19 20 24 25 27 28 29 30 45 46 47 50 54",12:"9 15 16 20 23 30 54 55",
    13:"7 8 13 16 21 22 23 25 30:2 31 41 42 54",14:"7 10 13 14 23 24 26 27 39 42:2 43:2 47 49 51 56",
    15:"0 6 14 18 20 24 26 27 29 31 35:2 36 38 44 46 55",16:"9 12 15 16 17 19 26 27 28 32 33 34 37 48 49 56",
    17:"10 11 12 13 14 15 16 18 19 22 23 25 26 27 28 29 30:2 31 32 34 35 37 41 42 48 56 57",
    18:"5 7 13 15 16 18 19 22 25:3 26:2 29:2 31 32 33 34 35 37 38 42 49 58",
    19:"1 2 4 6 7 8 10 12 15 18 19 23 25 26:3 29 32 34 36 37 38 40 43 45 46 47 51 57",
    20:"10 12 15 16 18 19 20 22 24 26 27 28 33 34 35 37 38 39 40 41 42 45:2 47 52 53",
    21:"8 12 13 15 18 19 20 21 23 24 26 29 30 32 33 34 37 38 40 41 42 43 44 45:2 47 52:2 53",
    22:"6 7 12 13 14 16 17 18 19 20 21 22 24:2 25:2 26 27 28 32 33 34 36 37:2 38:2 39 40 41 42 44 47 53",
    23:"6 8 9 10 12 14:2 15 17:2 18 19 20 21 22 23 24 25 26 27 28 29 30 31 33 34 35 36:2 37:4 38:2 39 40 41 42 44 45 47 48 49 50 54 55 60",
    24:"5 6 8 9:3 10 11 12:2 13 14 15:2 17:2 18 19 20 21 22 23:2 24:2 25 26 27 28 29 31 32 33:2 35 36:2 37:2 38 39 41 43 44 46 54",
    25:"5 9 12 14:2 15 16:2 17 18 19 20:2 21 22 23:2 24:3 25:2 26 28 31 32:2 33:2 34 35:2 36:2 37:3 38 39:2 43 44:2 46:2 49 61",
    26:"6 8 11 12 13 14 15 16 18 19 20 21 22:2 23:3 24:4 25:2 26 28 29 30 33:2 34:3 35:2 36:2 37:2 38 39:2 41:3 43 44:2 45 46 47",
    27:"7 9 13 15 16 17 18 20:2 22 23:3 24:2 25:3 26:2 27:2 28 29 32 36 37 38:2 39 41 43 44:2 45 48:2 54 55",
    28:"4 5 7 8 10 12 15 18 19 22:3 24 26 28 29:2 30:2 35 36 37 38 39 40 42 44 53 54",
    29:"8 10 12 14 15 18 19 20 21 24:2 25 27 28 30:2 31:2 33 36 37:2 38:2 39:2 41 43 45 53 56",
    30:"6 12 13 18 19 20 21 22 25:2 30:2 35 36:2 37:2 38:2 40 41 42 45 52 54",
    31:"4 5 6 7 8 10 15 16 17 19 20 22 24 25 26 27 28:2 30 31:2 32 33 34 35 36:2 37 40 41 42 45 48 52 55",
    32:"4 5 6 8 10 11 12 13 14 15 16 19 20 22 25 26 27 29 30 31 32 33:2 34:3 35:2 36:2 38 39 42 43 44 45 47 52 55",
    33:"8 17 18 19 20 21 22 23:2 26:2 28 29 30:2 31 32 33:2 34:2 39 42 52 53 54 55",
    34:"7 8 10 12 13 15 16 18 19 23:4 24:2 25 26 27 28:2 30 31 32 33:2 34:2 37 38 41:2 53 56 57",
    35:"12 13 15 19 21 22 24:2 25 27 29 31 32 33:2 35 38 39 41:2",
    36:"7 10 12 14 20:2 21 22 24 25:2 26 27 28 29 30 32:2 33 34 42 43 55",
    37:"7 9 10 15 16 17 18:2 19 20 21 22 23:2 24 25 26 27 28 29 30 31 32:3 33 34 42 47",
    38:"5:2 13 14 15 17 18 19 20 21 22 31 32 33 42",39:"3 22 24 26 27 28 29 31",40:"13 14 15 16 17 24 25 28 29 32 38 40 41",
    41:"11 12 14 15 21 22 23 25 26 27:2 28:2 30 31:2 32 37",42:"7 11 15 23 24 25 26 27 31 32 33",43:"8 10 19 23 25 26 29:2 31 32 38",
    44:"10 11 12 14 15 18 19 23 24 27 28 29 32",45:"14 18 21 23 25 29 30 31 32:2",46:"17 18 20 23 24 25 26:2 28 30:2 31 32",
    47:"14 22 23 24 25 27 28",48:"18 20 21 26 32",49:"19 20 23 25 27 29:3",50:"20 22 23 24 25 29:2 30",51:"19 22 23 25",52:"26 30",53:"21 24 29",
    54:"22 24 25 26 28 29 30",55:"22 23 25 26 27:2 28 30 32",56:"24 25 26 27:2 28:2 30",57:"24 25 26",58:"26 27 28 29 30 31 32",59:"24 29",60:"25"
  };
  const colors = { 1: "#ffbfbf", 2: "#ff8080", 3: "#ff4040", 4: "#ff0000" };
  const step = 6.87, off = 0.6, cols = 63, nrows = 61;
  let out = "";
  for (const r in rows) {
    rows[r].split(" ").forEach(function (t) {
      const p = t.split(":");
      out += `<rect x="${off + p[0] * step}" y="${off + r * step}" width="${step}" height="${step}" fill="${colors[p[1] || 1]}"/>`;
    });
  }
  let d = "";
  for (let c = 0; c <= cols; c++) d += `M${off + c * step} ${off}V${off + nrows * step}`;
  for (let r = 0; r <= nrows; r++) d += `M${off} ${off + r * step}H${off + cols * step}`;
  out += `<path d="${d}" fill="none" stroke="#888" stroke-width=".5"/>`;
  document.getElementById("map").innerHTML = out;
</script>
</body>
</html>
